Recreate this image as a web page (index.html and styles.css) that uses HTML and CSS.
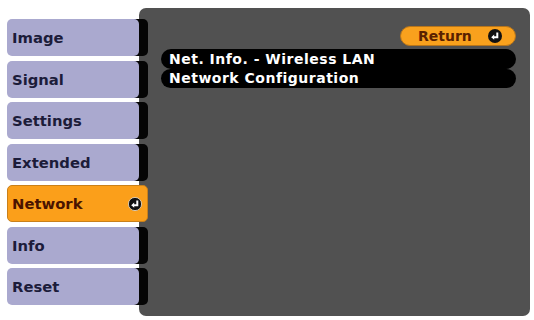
FILE: index.html
```html
<!DOCTYPE html>
<html>
<head>
<meta charset="utf-8">
<link rel="stylesheet" href="styles.css">
</head>
<body>
<div class="screen">
  <nav class="tabs">
    <div class="tab">Image</div>
    <div class="tab">Signal</div>
    <div class="tab">Settings</div>
    <div class="tab">Extended</div>
    <div class="tab tab-active">Network
      <svg class="enter" viewBox="0 0 14 14" width="14" height="14"><circle cx="7" cy="7" r="6.6" fill="#111" stroke="#e8e0d0" stroke-width="0.8"/><path d="M9.3 3.6 V8.2 H5.4" fill="none" stroke="#fff" stroke-width="2"/><path d="M3.2 8.2 L6.2 5.6 L6.2 10.8 Z" fill="#fff"/></svg>
    </div>
    <div class="tab">Info</div>
    <div class="tab">Reset</div>
  </nav>
  <main class="panel">
    <div class="return">Return
      <svg class="enter" viewBox="0 0 14 14" width="14" height="14"><circle cx="7" cy="7" r="7" fill="#111"/><path d="M9.3 3.6 V8.2 H5.4" fill="none" stroke="#fff" stroke-width="2"/><path d="M3.2 8.2 L6.2 5.6 L6.2 10.8 Z" fill="#fff"/></svg>
    </div>
    <div class="rows">
      <div class="row">Net. Info. - Wireless LAN</div>
      <div class="row">Network Configuration</div>
    </div>
  </main>
</div>
</body>
</html>
```
FILE: styles.css
```css
html, body {
  margin: 0;
  padding: 0;
  background: #ffffff;
}
body {
  width: 534px;
  height: 320px;
  overflow: hidden;
  font-family: "DejaVu Sans", "Liberation Sans", sans-serif;
  font-weight: bold;
}
.screen {
  display: flex;
  padding: 8px 4px 4px 7px;
  height: 320px;
  box-sizing: border-box;
}
.tabs {
  width: 132px;
  flex: none;
  display: flex;
  flex-direction: column;
  gap: 4.5px;
  padding-top: 11px;
  position: relative;
  z-index: 1;
}
.tab {
  height: 37px;
  background: #aaa9cf;
  border-radius: 5px;
  box-shadow: 9px 0 0 #050505;
  color: #1c1c3a;
  font-size: 14.8px;
  display: flex;
  align-items: center;
  padding-left: 5px;
  box-sizing: border-box;
}
.tab-active {
  width: 141px;
  background: #fb9f1a;
  border: 1px solid #c9801a;
  box-shadow: none;
  color: #4a1400;
  padding-left: 4px;
  padding-right: 5px;
  justify-content: space-between;
  border-radius: 5px;
}
.panel {
  flex: 1;
  background: #515151;
  border-radius: 7px;
  display: flex;
  flex-direction: column;
  padding: 18px 14px 0 22px;
}
.return {
  align-self: flex-end;
  width: 116px;
  height: 20px;
  box-sizing: border-box;
  background: #f9a11d;
  border: 1px solid #b8751a;
  border-radius: 10px;
  color: #5a2000;
  font-size: 14px;
  display: flex;
  align-items: center;
  justify-content: space-between;
  padding: 0 13px 0 17px;
}
.rows {
  display: flex;
  flex-direction: column;
  margin-top: 3px;
}
.row {
  height: 19.5px;
  background: #000;
  border-radius: 10px;
  color: #fff;
  font-size: 14px;
  letter-spacing: 0.5px;
  display: flex;
  align-items: center;
  padding-left: 8px;
}
.enter {
  flex: none;
}
```
